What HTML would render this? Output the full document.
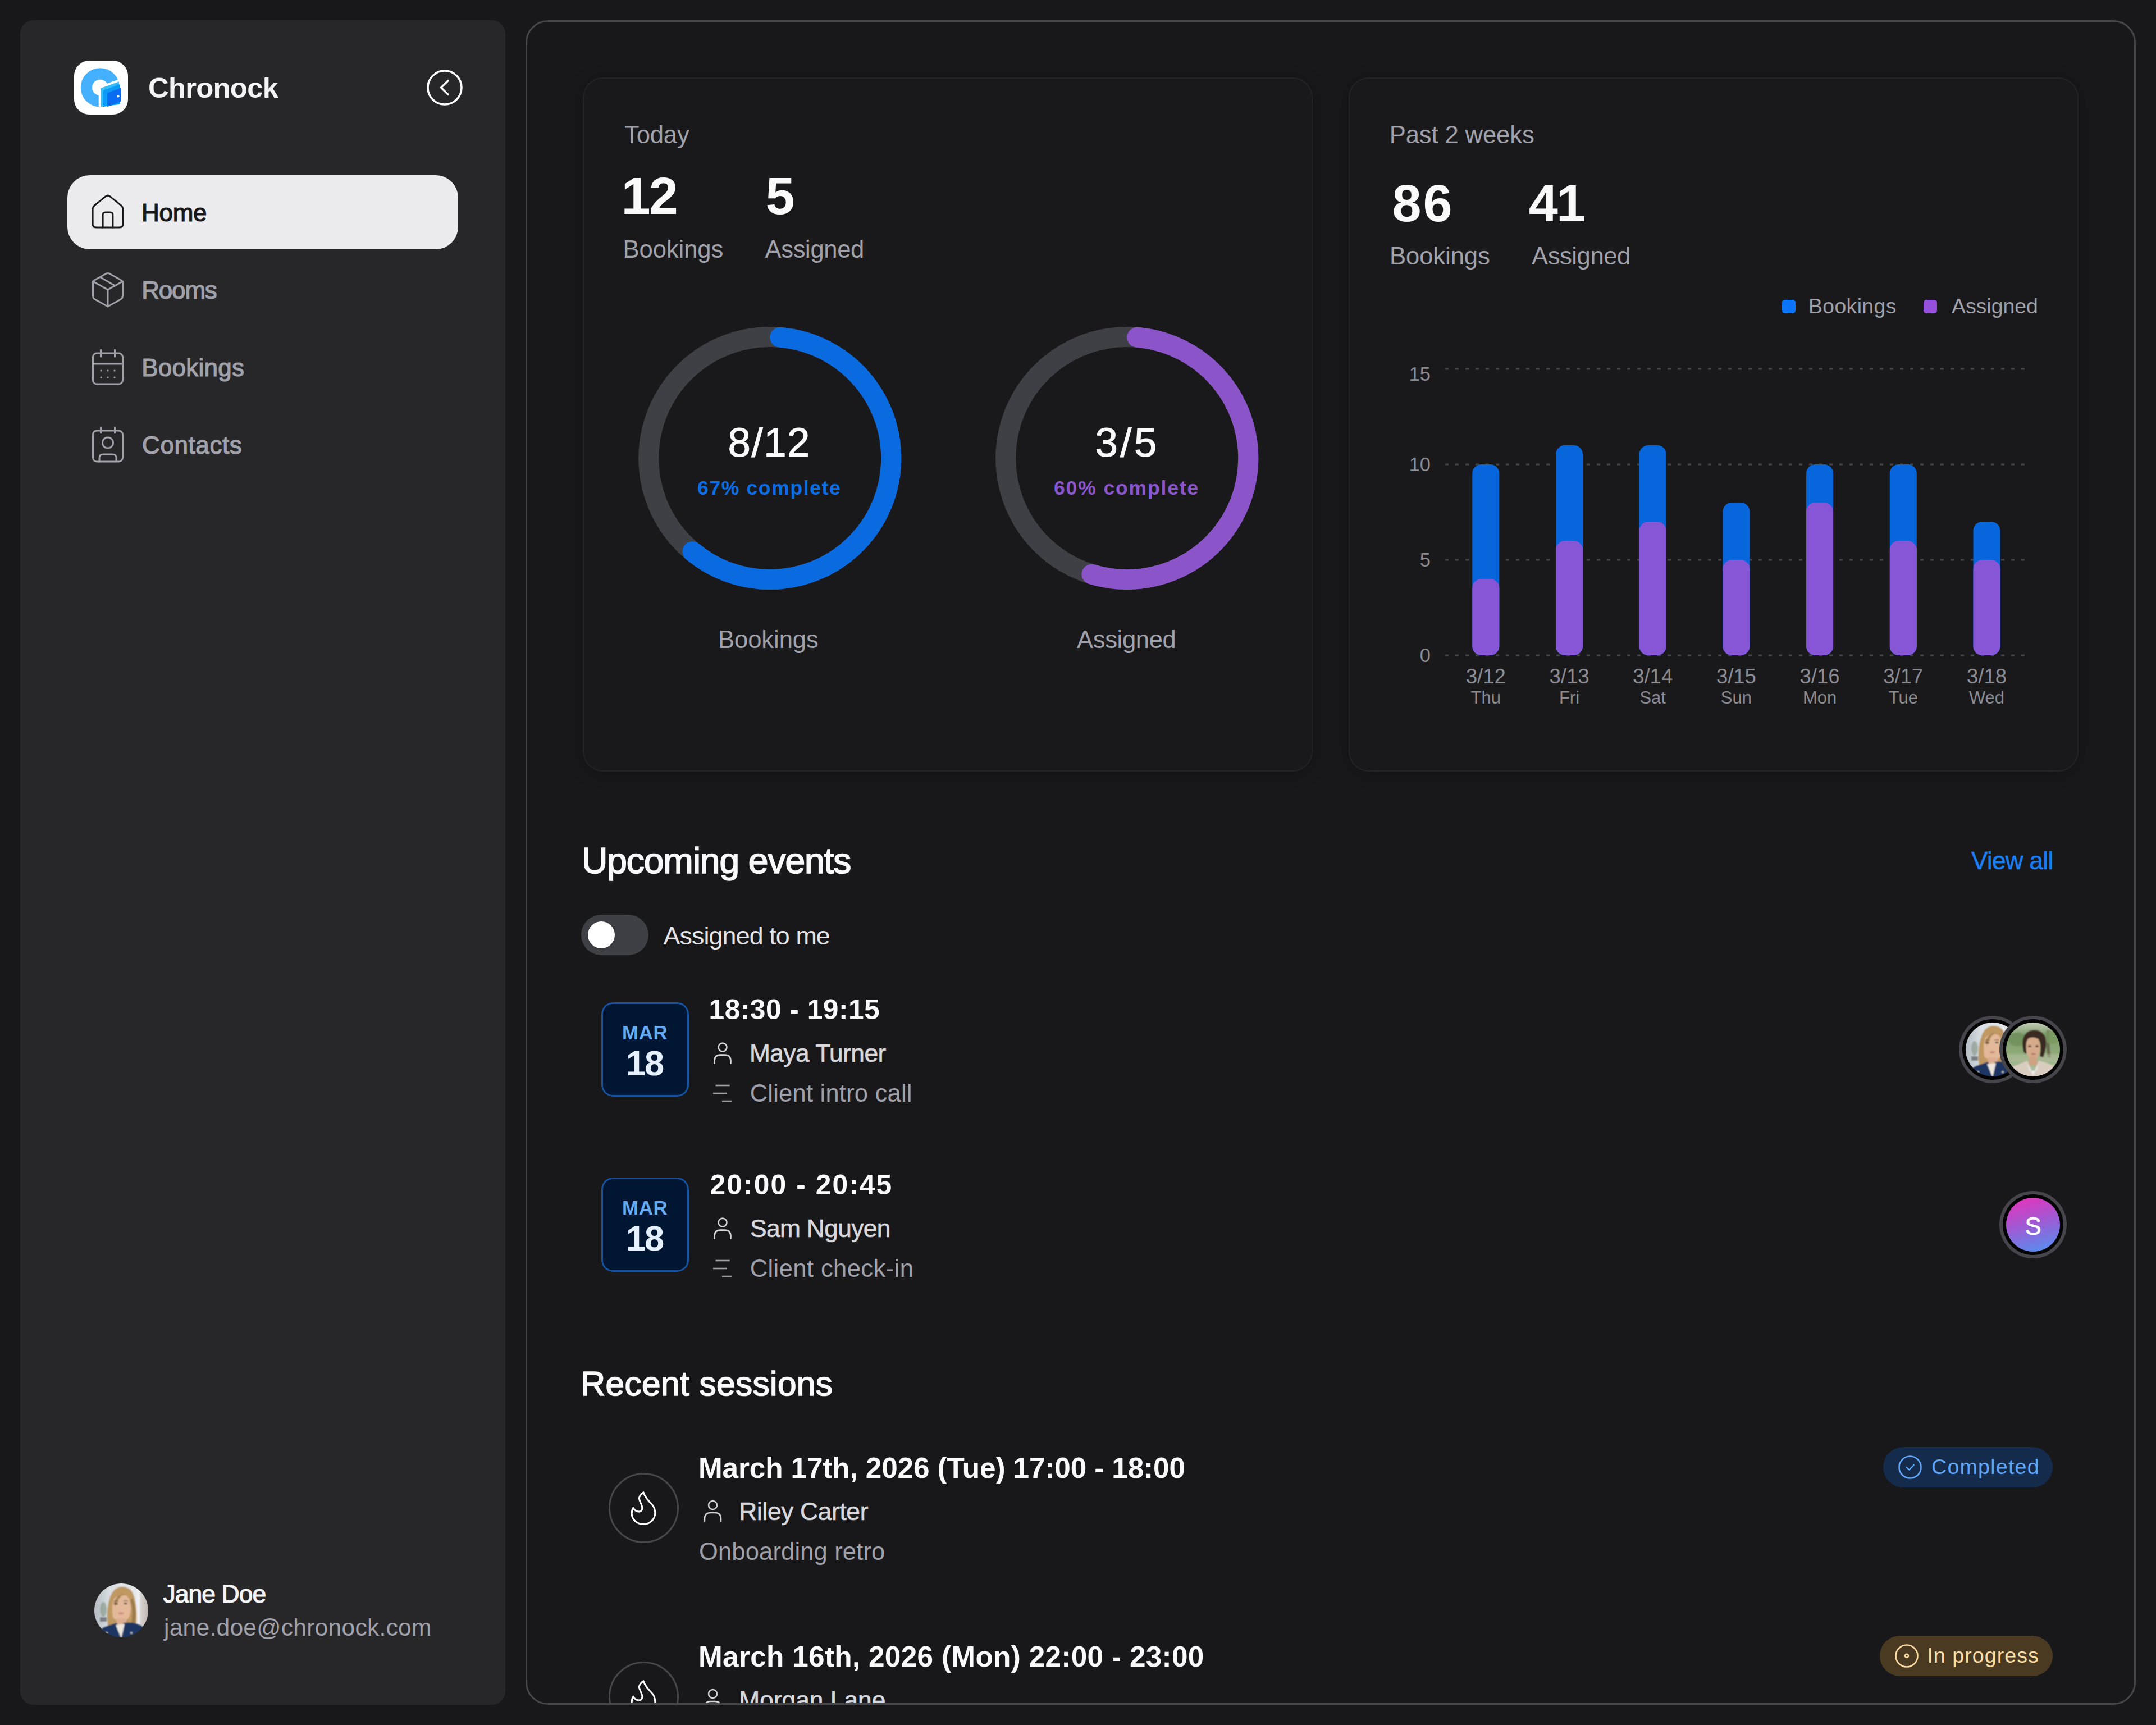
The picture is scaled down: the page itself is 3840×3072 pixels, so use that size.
<!DOCTYPE html>
<html><head><meta charset="utf-8"><title>Chronock</title>
<style>
html,body{margin:0;padding:0;}
body{width:3840px;height:3072px;background:#18181b;position:relative;overflow:hidden;font-family:"Liberation Sans",sans-serif;}
.t{position:absolute;white-space:nowrap;line-height:1;}
.abs{position:absolute;}
svg{position:absolute;overflow:visible;}
</style></head><body>
<div class="abs" style="left:36px;top:36px;width:864px;height:3000px;background:#27272a;border-radius:24px;"></div><svg style="left:0;top:0" width="3840" height="3072" viewBox="0 0 3840 3072">
<rect x="132" y="108" width="96" height="96" rx="27" fill="#ffffff"/>
<circle cx="178.4" cy="155.9" r="24.4" fill="none" stroke="#45b0fd" stroke-width="20.4"/>
<polygon points="175.7,154.3 221,137.7 219,196 175.7,199" fill="#ffffff"/>
<polygon points="179.1,157.2 211.9,145.2 212.4,186 179.1,190.2" fill="#38bdf8"/>
<polygon points="183.9,160.8 213.7,150 213.8,185 183.9,190.2" fill="#0b9bf6"/>
<polygon points="191,165.7 216,156 216,180.5 191,190.2" fill="#0a6cf2"/>
<circle cx="210.3" cy="171.3" r="2.3" fill="#ffffff"/>
</svg><div class="t" style="left:264.0px;top:132.4px;font-size:50.87px;letter-spacing:-0.77px;font-weight:700;color:#f4f4f5;">Chronock</div><svg style="left:0;top:0" width="900" height="300">
<circle cx="792" cy="156" r="30" fill="none" stroke="#ffffff" stroke-width="3.5"/>
<polyline points="798.2,143.6 785.6,156 798.2,168.4" fill="none" stroke="#ffffff" stroke-width="3.5" stroke-linecap="round" stroke-linejoin="round"/>
</svg><div class="abs" style="left:120px;top:312px;width:696px;height:132px;background:#ececee;border-radius:40px;"></div><svg style="left:0;top:0" width="900" height="900" fill="none" stroke-linecap="round" stroke-linejoin="round">
<g stroke="#18181b" stroke-width="3">
 <path d="M165.1 373 Q165.1 368.5 168.5 365.6 L188.2 349.6 Q192 346.6 195.8 349.6 L215.5 365.6 Q218.9 368.5 218.9 373 L218.9 399 Q218.9 405 212.9 405 L171.1 405 Q165.1 405 165.1 399 Z"/>
 <path d="M183.1 405 L183.1 382.5 Q183.1 378 187.6 378 L196.4 378 Q200.9 378 200.9 382.5 L200.9 405"/>
</g>
<g stroke="#a1a1aa" stroke-width="3">
 <path d="M188.5 487.5 Q192 485.5 195.5 487.5 L215 498.5 Q218.5 500.5 218.5 504.5 L218.5 527 Q218.5 531 215 533 L195.5 544 Q192 546 188.5 544 L169 533 Q165.5 531 165.5 527 L165.5 504.5 Q165.5 500.5 169 498.5 Z"/>
 <path d="M165.5 501 L192 516 L218.5 501"/>
 <path d="M192 516 L192 546"/>
 <path d="M178.5 493.5 L205 509"/>
 <rect x="165.5" y="629" width="53" height="55" rx="7"/>
 <path d="M165.5 648 L218.5 648"/>
 <path d="M179.5 623 L179.5 635"/><path d="M204.5 623 L204.5 635"/>
 <rect x="165.5" y="767" width="53" height="55" rx="7"/>
 <path d="M179.5 761 L179.5 771"/><path d="M204.5 761 L204.5 771"/>
 <circle cx="192" cy="788.5" r="9.5"/>
 <path d="M177 821 L177 815.5 Q177 809 183.5 809 L200.5 809 Q207 809 207 815.5 L207 821"/>
</g>
<g fill="#a1a1aa">
 <circle cx="180" cy="660" r="1.6"/><circle cx="192" cy="660" r="1.6"/><circle cx="204" cy="660" r="1.6"/>
 <circle cx="180" cy="672" r="1.6"/><circle cx="192" cy="672" r="1.6"/><circle cx="204" cy="672" r="1.6"/>
</g>
</svg><div class="t" style="left:252.1px;top:356.7px;font-size:44.00px;letter-spacing:-0.30px;font-weight:400;color:#18181b;-webkit-text-stroke:1.19px #18181b;">Home</div><div class="t" style="left:252.3px;top:494.7px;font-size:44.00px;letter-spacing:-1.21px;font-weight:400;color:#a1a1aa;-webkit-text-stroke:1.19px #a1a1aa;">Rooms</div><div class="t" style="left:252.3px;top:632.5px;font-size:44.00px;letter-spacing:0.23px;font-weight:400;color:#a1a1aa;-webkit-text-stroke:1.19px #a1a1aa;">Bookings</div><div class="t" style="left:253.1px;top:771.0px;font-size:44.00px;letter-spacing:0.58px;font-weight:400;color:#a1a1aa;-webkit-text-stroke:1.19px #a1a1aa;">Contacts</div><svg style="left:168px;top:2820px" width="96" height="96" viewBox="0 0 96 96">
<defs><clipPath id="jac"><circle cx="48" cy="48" r="48"/></clipPath>
<filter id="jaf" x="-10%" y="-10%" width="120%" height="120%"><feGaussianBlur stdDeviation="1.1"/></filter>
<linearGradient id="jabg" x1="0" y1="0" x2="1" y2="0"><stop offset="0" stop-color="#aeb7bd"/><stop offset="0.3" stop-color="#d9dee2"/><stop offset="0.75" stop-color="#e6e8ea"/><stop offset="1" stop-color="#b9aaa2"/></linearGradient></defs>
<g clip-path="url(#jac)"><g filter="url(#jaf)">
<rect x="-4" y="-4" width="104" height="104" fill="url(#jabg)"/>
<rect x="76" y="0" width="5" height="80" fill="#f4f6f8" opacity="0.8"/>
<ellipse cx="16" cy="46" rx="6" ry="13" fill="#6f8570" opacity="0.5"/>
<rect x="10" y="60" width="12" height="8" fill="#2d3035" opacity="0.5"/>
<path d="M24 78 Q20 48 28 24 Q36 5 50 6 Q66 6 71 24 Q78 50 74 80 Z" fill="#bf9862"/>
<path d="M33 60 Q30 36 36 26 Q46 18 58 22 Q66 30 65 48 Q64 62 56 66 L42 66 Q35 64 33 60 Z" fill="#e3b999"/>
<path d="M34 36 Q40 18 54 19 Q44 22 38 40 Z" fill="#a98352"/>
<path d="M64 30 Q70 44 66 70 L72 72 Q76 46 68 26 Z" fill="#9c7a4c"/>
<path d="M40 62 L56 62 L58 80 L38 80 Z" fill="#dcae91"/>
<ellipse cx="39" cy="36" rx="3.2" ry="1.6" fill="#6b5148"/><ellipse cx="55.5" cy="35.5" rx="3.2" ry="1.6" fill="#6b5148"/><path d="M35 32 Q39 30 43 32" stroke="#8a6a4e" stroke-width="1.4" fill="none"/><path d="M52 31.5 Q56 29.5 60 31.5" stroke="#8a6a4e" stroke-width="1.4" fill="none"/><ellipse cx="47.5" cy="53" rx="5" ry="1.8" fill="#c98578"/>
<path d="M4 100 Q6 80 22 76 L40 70 L46 92 L52 70 Q70 68 82 74 Q94 80 96 100 Z" fill="#1e3463"/>
<path d="M38 74 L48 98 L54 72 Z" fill="#ece6df"/>
<circle cx="22" cy="88" r="1.8" fill="#d9d4c8"/><circle cx="66" cy="88" r="1.8" fill="#d9d4c8"/>
</g></g></svg><div class="t" style="left:290.6px;top:2816.7px;font-size:44.33px;letter-spacing:-0.90px;font-weight:400;color:#f4f4f5;-webkit-text-stroke:1.20px #f4f4f5;">Jane Doe</div><div class="t" style="left:292.0px;top:2876.9px;font-size:42.59px;letter-spacing:0.24px;font-weight:400;color:#a1a1aa;">jane.doe@chronock.com</div><div class="abs" style="left:936px;top:36px;width:2868px;height:3000px;box-sizing:border-box;border:3px solid #47474a;border-radius:40px;background:#18181b;overflow:hidden;"><div class="abs" style="left:-939px;top:-39px;width:3840px;height:3072px;"><div class="abs" style="left:1038px;top:138px;width:1300px;height:1236px;box-sizing:border-box;border:2px solid #232327;border-radius:36px;background:#19191c;box-shadow:0 4px 30px rgba(0,0,0,0.22);"></div><div class="abs" style="left:2402px;top:138px;width:1300px;height:1236px;box-sizing:border-box;border:2px solid #232327;border-radius:36px;background:#19191c;box-shadow:0 4px 30px rgba(0,0,0,0.22);"></div><div class="t" style="left:1112.0px;top:218.8px;font-size:43.60px;letter-spacing:-0.16px;font-weight:400;color:#a1a1aa;">Today</div><div class="t" style="left:1106.5px;top:302.4px;font-size:93.60px;letter-spacing:-2.81px;font-weight:700;color:#fafafa;">12</div><div class="t" style="left:1363.5px;top:302.4px;font-size:93.60px;letter-spacing:0.00px;font-weight:700;color:#fafafa;">5</div><div class="t" style="left:1109.6px;top:422.8px;font-size:43.60px;letter-spacing:-0.09px;font-weight:400;color:#a1a1aa;">Bookings</div><div class="t" style="left:1362.5px;top:422.8px;font-size:43.60px;letter-spacing:-0.37px;font-weight:400;color:#a1a1aa;">Assigned</div><div class="t" style="left:1296.5px;top:752.2px;font-size:72.67px;letter-spacing:1.53px;font-weight:400;color:#fafafa;-webkit-text-stroke:1.02px #fafafa;">8/12</div><div class="t" style="left:1242.0px;top:852.1px;font-size:35.47px;letter-spacing:1.66px;font-weight:700;color:#0a6fe6;">67% complete</div><div class="t" style="left:1279.0px;top:1117.8px;font-size:43.60px;letter-spacing:-0.08px;font-weight:400;color:#a1a1aa;">Bookings</div><div class="t" style="left:1950.5px;top:752.2px;font-size:72.67px;letter-spacing:4.44px;font-weight:400;color:#fafafa;-webkit-text-stroke:1.02px #fafafa;">3/5</div><div class="t" style="left:1877.0px;top:852.1px;font-size:35.47px;letter-spacing:1.89px;font-weight:700;color:#8b55cc;">60% complete</div><div class="t" style="left:1918.0px;top:1117.8px;font-size:43.60px;letter-spacing:-0.36px;font-weight:400;color:#a1a1aa;">Assigned</div><div class="t" style="left:2474.7px;top:219.1px;font-size:43.60px;letter-spacing:-0.11px;font-weight:400;color:#a1a1aa;">Past 2 weeks</div><div class="t" style="left:2479.6px;top:314.9px;font-size:93.60px;letter-spacing:2.81px;font-weight:700;color:#fafafa;">86</div><div class="t" style="left:2722.7px;top:314.9px;font-size:93.60px;letter-spacing:-2.81px;font-weight:700;color:#fafafa;">41</div><div class="t" style="left:2475.0px;top:434.8px;font-size:43.60px;letter-spacing:-0.08px;font-weight:400;color:#a1a1aa;">Bookings</div><div class="t" style="left:2728.0px;top:434.8px;font-size:43.60px;letter-spacing:-0.44px;font-weight:400;color:#a1a1aa;">Assigned</div><div class="t" style="left:3221.0px;top:526.8px;font-size:37.35px;letter-spacing:0.39px;font-weight:400;color:#a1a1aa;">Bookings</div><div class="t" style="left:3476.0px;top:526.8px;font-size:37.35px;letter-spacing:0.03px;font-weight:400;color:#a1a1aa;">Assigned</div><svg style="left:0;top:0" width="3840" height="1400"><circle cx="1371.25" cy="816" r="216" fill="none" stroke="#3f3f46" stroke-width="36"/><path d="M1389.32 600.76 A216.00 216.00 0 1 1 1233.28 982.19" fill="none" stroke="#0a6ae0" stroke-width="36" stroke-linecap="round"/><circle cx="2007.25" cy="816" r="216" fill="none" stroke="#3f3f46" stroke-width="36"/><path d="M2025.32 600.76 A216.00 216.00 0 1 1 1944.46 1022.67" fill="none" stroke="#8b54c9" stroke-width="36" stroke-linecap="round"/><rect x="3174" y="534" width="24" height="24" rx="5" fill="#0a74fb"/><rect x="3426" y="534" width="24" height="24" rx="5" fill="#9551db"/><line x1="2574" y1="1167" x2="3612" y2="1167" stroke="#444449" stroke-width="3" stroke-dasharray="6 12"/><line x1="2574" y1="997" x2="3612" y2="997" stroke="#444449" stroke-width="3" stroke-dasharray="6 12"/><line x1="2574" y1="827" x2="3612" y2="827" stroke="#444449" stroke-width="3" stroke-dasharray="6 12"/><line x1="2574" y1="657" x2="3612" y2="657" stroke="#444449" stroke-width="3" stroke-dasharray="6 12"/><rect x="2622.3" y="827" width="48" height="340" rx="16" fill="#0766dc"/><rect x="2622.3" y="1031" width="48" height="136" rx="16" fill="#8756d6"/><rect x="2771.0" y="793" width="48" height="374" rx="16" fill="#0766dc"/><rect x="2771.0" y="963" width="48" height="204" rx="16" fill="#8756d6"/><rect x="2919.7" y="793" width="48" height="374" rx="16" fill="#0766dc"/><rect x="2919.7" y="929" width="48" height="238" rx="16" fill="#8756d6"/><rect x="3068.4" y="895" width="48" height="272" rx="16" fill="#0766dc"/><rect x="3068.4" y="997" width="48" height="170" rx="16" fill="#8756d6"/><rect x="3217.1" y="827" width="48" height="340" rx="16" fill="#0766dc"/><rect x="3217.1" y="895" width="48" height="272" rx="16" fill="#8756d6"/><rect x="3365.8" y="827" width="48" height="340" rx="16" fill="#0766dc"/><rect x="3365.8" y="963" width="48" height="204" rx="16" fill="#8756d6"/><rect x="3514.5" y="929" width="48" height="238" rx="16" fill="#0766dc"/><rect x="3514.5" y="997" width="48" height="170" rx="16" fill="#8756d6"/></svg><svg style="left:0;top:0" width="3840" height="1400" font-family="Liberation Sans, sans-serif" fill="#8b8b91"><text x="2548" y="1179.2" font-size="34.5" text-anchor="end">0</text><text x="2548" y="1009.2" font-size="34.5" text-anchor="end">5</text><text x="2548" y="839.2" font-size="34.5" text-anchor="end">10</text><text x="2548" y="678.4" font-size="34.5" text-anchor="end">15</text><text x="2646.3" y="1217" font-size="36.5" text-anchor="middle">3/12</text><text x="2646.3" y="1253.2" font-size="31" text-anchor="middle">Thu</text><text x="2795.0" y="1217" font-size="36.5" text-anchor="middle">3/13</text><text x="2795.0" y="1253.2" font-size="31" text-anchor="middle">Fri</text><text x="2943.7" y="1217" font-size="36.5" text-anchor="middle">3/14</text><text x="2943.7" y="1253.2" font-size="31" text-anchor="middle">Sat</text><text x="3092.4" y="1217" font-size="36.5" text-anchor="middle">3/15</text><text x="3092.4" y="1253.2" font-size="31" text-anchor="middle">Sun</text><text x="3241.1" y="1217" font-size="36.5" text-anchor="middle">3/16</text><text x="3241.1" y="1253.2" font-size="31" text-anchor="middle">Mon</text><text x="3389.8" y="1217" font-size="36.5" text-anchor="middle">3/17</text><text x="3389.8" y="1253.2" font-size="31" text-anchor="middle">Tue</text><text x="3538.5" y="1217" font-size="36.5" text-anchor="middle">3/18</text><text x="3538.5" y="1253.2" font-size="31" text-anchor="middle">Wed</text></svg><div class="t" style="left:1035.9px;top:1501.0px;font-size:64.10px;letter-spacing:-1.05px;font-weight:400;color:#fafafa;-webkit-text-stroke:1.73px #fafafa;">Upcoming events</div><div class="t" style="left:3511.0px;top:1511.0px;font-size:44.04px;letter-spacing:-0.68px;font-weight:400;color:#1a7ef2;-webkit-text-stroke:0.62px #1a7ef2;">View all</div><div class="abs" style="left:1035px;top:1629px;width:120px;height:72px;border-radius:36px;background:#3f3f46;"></div><div class="abs" style="left:1047px;top:1641px;width:48px;height:48px;border-radius:24px;background:#ffffff;box-shadow:0 1px 3px rgba(0,0,0,0.3);"></div><div class="t" style="left:1181.5px;top:1643.6px;font-size:44.77px;letter-spacing:-0.87px;font-weight:400;color:#e4e4e7;">Assigned to me</div><div class="abs" style="left:1071px;top:1785px;width:156px;height:168px;box-sizing:border-box;border:3px solid #1453a2;border-radius:21px;background:#011632;"></div><svg style="left:0;top:0" width="3840" height="3072" fill="none" stroke="#d4d4d8" stroke-width="2.6" stroke-linecap="round">
<circle cx="1287" cy="1865.1" r="7.5"/>
<path d="M1272.5 1893.6 L1272.5 1889.6 Q1272.5 1878.6 1283 1878.6 L1291 1878.6 Q1301.5 1878.6 1301.5 1889.6 L1301.5 1893.6"/>
</svg><svg style="left:0;top:0" width="3840" height="3072" fill="none" stroke="#a1a1aa" stroke-width="2.6" stroke-linecap="butt">
<path d="M1274.5 1933 L1299.7 1933"/><path d="M1270 1947 L1295 1947"/><path d="M1286 1961 L1303.6 1961"/>
</svg><div class="abs" style="left:1071px;top:2097px;width:156px;height:168px;box-sizing:border-box;border:3px solid #1453a2;border-radius:21px;background:#011632;"></div><svg style="left:0;top:0" width="3840" height="3072" fill="none" stroke="#d4d4d8" stroke-width="2.6" stroke-linecap="round">
<circle cx="1287" cy="2177.1" r="7.5"/>
<path d="M1272.5 2205.6 L1272.5 2201.6 Q1272.5 2190.6 1283 2190.6 L1291 2190.6 Q1301.5 2190.6 1301.5 2201.6 L1301.5 2205.6"/>
</svg><svg style="left:0;top:0" width="3840" height="3072" fill="none" stroke="#a1a1aa" stroke-width="2.6" stroke-linecap="butt">
<path d="M1274.5 2245 L1299.7 2245"/><path d="M1270 2259 L1295 2259"/><path d="M1286 2273 L1303.6 2273"/>
</svg><div class="t" style="left:1108.0px;top:1821.9px;font-size:34.90px;letter-spacing:0.57px;font-weight:700;color:#66abf6;">MAR</div><div class="t" style="left:1114.8px;top:1861.7px;font-size:63.20px;letter-spacing:-1.90px;font-weight:700;color:#e6effc;">18</div><div class="t" style="left:1262.6px;top:1774.3px;font-size:49.70px;letter-spacing:0.48px;font-weight:700;color:#fafafa;">18:30 - 19:15</div><div class="t" style="left:1335.0px;top:1853.7px;font-size:44.30px;letter-spacing:-0.54px;font-weight:400;color:#d8d8dc;-webkit-text-stroke:0.62px #d8d8dc;">Maya Turner</div><div class="t" style="left:1335.7px;top:1925.9px;font-size:43.50px;letter-spacing:0.22px;font-weight:400;color:#a1a1aa;">Client intro call</div><div class="t" style="left:1108.0px;top:2133.9px;font-size:34.90px;letter-spacing:0.57px;font-weight:700;color:#66abf6;">MAR</div><div class="t" style="left:1114.8px;top:2173.7px;font-size:63.20px;letter-spacing:-1.90px;font-weight:700;color:#e6effc;">18</div><div class="t" style="left:1264.6px;top:2086.3px;font-size:49.70px;letter-spacing:2.11px;font-weight:700;color:#fafafa;">20:00 - 20:45</div><div class="t" style="left:1336.0px;top:2165.7px;font-size:44.30px;letter-spacing:-0.64px;font-weight:400;color:#d8d8dc;-webkit-text-stroke:0.62px #d8d8dc;">Sam Nguyen</div><div class="t" style="left:1335.7px;top:2237.9px;font-size:43.50px;letter-spacing:0.42px;font-weight:400;color:#a1a1aa;">Client check-in</div><div class="abs" style="left:3489px;top:1809px;width:120px;height:120px;border-radius:60px;background:#45454b;"></div><div class="abs" style="left:3495px;top:1815px;width:108px;height:108px;border-radius:54px;background:#030304;"></div><svg style="left:3501px;top:1821px" width="96" height="96" viewBox="0 0 96 96">
<defs><clipPath id="a1c"><circle cx="48" cy="48" r="48"/></clipPath>
<filter id="a1f" x="-10%" y="-10%" width="120%" height="120%"><feGaussianBlur stdDeviation="1.1"/></filter>
<linearGradient id="a1bg" x1="0" y1="0" x2="1" y2="0"><stop offset="0" stop-color="#aeb7bd"/><stop offset="0.3" stop-color="#d9dee2"/><stop offset="0.75" stop-color="#e6e8ea"/><stop offset="1" stop-color="#b9aaa2"/></linearGradient></defs>
<g clip-path="url(#a1c)"><g filter="url(#a1f)">
<rect x="-4" y="-4" width="104" height="104" fill="url(#a1bg)"/>
<rect x="76" y="0" width="5" height="80" fill="#f4f6f8" opacity="0.8"/>
<ellipse cx="16" cy="46" rx="6" ry="13" fill="#6f8570" opacity="0.5"/>
<rect x="10" y="60" width="12" height="8" fill="#2d3035" opacity="0.5"/>
<path d="M24 78 Q20 48 28 24 Q36 5 50 6 Q66 6 71 24 Q78 50 74 80 Z" fill="#bf9862"/>
<path d="M33 60 Q30 36 36 26 Q46 18 58 22 Q66 30 65 48 Q64 62 56 66 L42 66 Q35 64 33 60 Z" fill="#e3b999"/>
<path d="M34 36 Q40 18 54 19 Q44 22 38 40 Z" fill="#a98352"/>
<path d="M64 30 Q70 44 66 70 L72 72 Q76 46 68 26 Z" fill="#9c7a4c"/>
<path d="M40 62 L56 62 L58 80 L38 80 Z" fill="#dcae91"/>
<ellipse cx="39" cy="36" rx="3.2" ry="1.6" fill="#6b5148"/><ellipse cx="55.5" cy="35.5" rx="3.2" ry="1.6" fill="#6b5148"/><path d="M35 32 Q39 30 43 32" stroke="#8a6a4e" stroke-width="1.4" fill="none"/><path d="M52 31.5 Q56 29.5 60 31.5" stroke="#8a6a4e" stroke-width="1.4" fill="none"/><ellipse cx="47.5" cy="53" rx="5" ry="1.8" fill="#c98578"/>
<path d="M4 100 Q6 80 22 76 L40 70 L46 92 L52 70 Q70 68 82 74 Q94 80 96 100 Z" fill="#1e3463"/>
<path d="M38 74 L48 98 L54 72 Z" fill="#ece6df"/>
<circle cx="22" cy="88" r="1.8" fill="#d9d4c8"/><circle cx="66" cy="88" r="1.8" fill="#d9d4c8"/>
</g></g></svg><div class="abs" style="left:3561px;top:1809px;width:120px;height:120px;border-radius:60px;background:#45454b;"></div><div class="abs" style="left:3567px;top:1815px;width:108px;height:108px;border-radius:54px;background:#030304;"></div><svg style="left:3573px;top:1821px" width="96" height="96" viewBox="0 0 96 96">
<defs><clipPath id="a2c"><circle cx="48" cy="48" r="48"/></clipPath>
<filter id="a2f" x="-10%" y="-10%" width="120%" height="120%"><feGaussianBlur stdDeviation="1.1"/></filter>
<linearGradient id="a2bg" x1="0" y1="0" x2="0" y2="1"><stop offset="0" stop-color="#cfd8c6"/><stop offset="0.25" stop-color="#7f9c6c"/><stop offset="0.6" stop-color="#8fab78"/><stop offset="1" stop-color="#c2c9b6"/></linearGradient></defs>
<g clip-path="url(#a2c)"><g filter="url(#a2f)">
<rect x="-4" y="-4" width="104" height="104" fill="url(#a2bg)"/>
<path d="M72 14 Q70 40 74 62 L80 62 Q76 40 78 14 Z" fill="#5b5142" opacity="0.7"/><ellipse cx="20" cy="30" rx="16" ry="12" fill="#6e8f5a" opacity="0.8"/><ellipse cx="82" cy="26" rx="16" ry="12" fill="#7a9a62" opacity="0.8"/><rect x="0" y="56" width="96" height="14" fill="#b5bfa2" opacity="0.5"/>
<path d="M30 46 Q26 20 44 14 Q62 10 70 26 Q74 42 66 62 L60 60 Q64 40 58 30 Q48 26 38 34 L36 56 Q30 54 30 46 Z" fill="#3b2b23"/>
<path d="M36 50 Q34 34 40 28 Q50 24 58 30 Q62 40 60 52 Q58 64 48 66 Q38 64 36 50 Z" fill="#d6ab8b"/>
<path d="M42 60 L54 60 L56 76 L40 76 Z" fill="#cfa282"/>
<ellipse cx="42" cy="42" rx="3" ry="1.5" fill="#4a3730"/><ellipse cx="55" cy="42" rx="3" ry="1.5" fill="#4a3730"/><ellipse cx="48.5" cy="56" rx="4.5" ry="1.6" fill="#b9786a"/>
<path d="M0 100 Q2 82 18 76 L38 68 L48 90 L58 68 Q78 72 88 80 Q96 88 96 100 Z" fill="#d9cdbf"/>
<path d="M38 72 L48 94 L58 72 L54 86 L42 86 Z" fill="#eeeef2"/>
</g></g></svg><div class="abs" style="left:3561px;top:2121px;width:120px;height:120px;border-radius:60px;background:#45454b;"></div><div class="abs" style="left:3567px;top:2127px;width:108px;height:108px;border-radius:54px;background:#030304;"></div><div class="abs" style="left:3573px;top:2133px;width:96px;height:96px;border-radius:48px;background:linear-gradient(165deg,#ec2fb8 0%,#a457d2 45%,#4d94f2 100%);"></div><div class="t" style="left:3606.5px;top:2162.0px;font-size:43.75px;letter-spacing:0.00px;font-weight:400;color:#ffffff;-webkit-text-stroke:0.61px #ffffff;">S</div><div class="t" style="left:1034.6px;top:2434.1px;font-size:60.32px;letter-spacing:0.42px;font-weight:400;color:#fafafa;-webkit-text-stroke:1.63px #fafafa;">Recent sessions</div><div class="abs" style="left:1083.5px;top:2622.5px;width:125px;height:125px;box-sizing:border-box;border:3px solid #46464b;border-radius:63px;"></div>
<svg style="left:0;top:0" width="3840" height="3072" fill="none" stroke="#ffffff" stroke-width="3" stroke-linejoin="round" stroke-linecap="round">
<path transform="translate(1146 2685)" d="M0 -27.3 C3 -18 10 -11 14.5 -6.5 C19 -2 20.8 3 20.8 9.6 C20.8 21 11 29.6 0 29.6 C-11.5 29.6 -20.8 21 -20.8 10.4 C-20.8 6.5 -19.8 2.8 -18.1 0.2 C-16.5 4.5 -12 7.3 -8 7 C-3 6.7 -0.8 2.5 -3 -4 C-5 -9.5 -9 -15 -7.2 -19 C-5.5 -23 -2.5 -25.5 0 -27.3 Z"/>
</svg><div class="abs" style="left:1083.5px;top:2958.5px;width:125px;height:125px;box-sizing:border-box;border:3px solid #46464b;border-radius:63px;"></div>
<svg style="left:0;top:0" width="3840" height="3072" fill="none" stroke="#ffffff" stroke-width="3" stroke-linejoin="round" stroke-linecap="round">
<path transform="translate(1146 3021)" d="M0 -27.3 C3 -18 10 -11 14.5 -6.5 C19 -2 20.8 3 20.8 9.6 C20.8 21 11 29.6 0 29.6 C-11.5 29.6 -20.8 21 -20.8 10.4 C-20.8 6.5 -19.8 2.8 -18.1 0.2 C-16.5 4.5 -12 7.3 -8 7 C-3 6.7 -0.8 2.5 -3 -4 C-5 -9.5 -9 -15 -7.2 -19 C-5.5 -23 -2.5 -25.5 0 -27.3 Z"/>
</svg><div class="t" style="left:1244.0px;top:2588.7px;font-size:51.30px;letter-spacing:-0.13px;font-weight:700;color:#fafafa;">March 17th, 2026 (Tue) 17:00 - 18:00</div><svg style="left:0;top:0" width="3840" height="3072" fill="none" stroke="#d4d4d8" stroke-width="2.6" stroke-linecap="round">
<circle cx="1269.5" cy="2680.5" r="7.5"/>
<path d="M1255.0 2709 L1255.0 2705 Q1255.0 2694 1265.5 2694 L1273.5 2694 Q1284.0 2694 1284.0 2705 L1284.0 2709"/>
</svg><div class="t" style="left:1316.3px;top:2669.9px;font-size:44.30px;letter-spacing:-0.34px;font-weight:400;color:#d8d8dc;-webkit-text-stroke:0.62px #d8d8dc;">Riley Carter</div><div class="t" style="left:1245.0px;top:2741.9px;font-size:43.50px;letter-spacing:0.16px;font-weight:400;color:#a1a1aa;">Onboarding retro</div><div class="t" style="left:1244.0px;top:2925.0px;font-size:51.30px;letter-spacing:0.31px;font-weight:700;color:#fafafa;">March 16th, 2026 (Mon) 22:00 - 23:00</div><svg style="left:0;top:0" width="3840" height="3072" fill="none" stroke="#d4d4d8" stroke-width="2.6" stroke-linecap="round">
<circle cx="1269.5" cy="3016.5" r="7.5"/>
<path d="M1255.0 3045 L1255.0 3041 Q1255.0 3030 1265.5 3030 L1273.5 3030 Q1284.0 3030 1284.0 3041 L1284.0 3045"/>
</svg><div class="t" style="left:1316.3px;top:3005.9px;font-size:44.30px;letter-spacing:0.00px;font-weight:400;color:#d8d8dc;-webkit-text-stroke:0.62px #d8d8dc;">Morgan Lane</div><div class="abs" style="left:3354px;top:2577px;width:302px;height:72px;border-radius:36px;background:#142b4c;"></div><svg style="left:0;top:0" width="3840" height="3072" fill="none" stroke="#62a6f8" stroke-width="2.6" stroke-linecap="round" stroke-linejoin="round">
<circle cx="3402" cy="2613" r="19.5"/><polyline points="3395.5,2613 3400.4,2617.5 3408.8,2609" stroke-width="2.3"/></svg><div class="t" style="left:3440.0px;top:2594.3px;font-size:37.65px;letter-spacing:1.20px;font-weight:400;color:#62a6f8;">Completed</div><div class="abs" style="left:3348px;top:2913px;width:308px;height:72px;border-radius:36px;background:#4a3a22;"></div><svg style="left:0;top:0" width="3840" height="3072" fill="none" stroke="#fcdca4" stroke-width="2.6">
<circle cx="3396" cy="2949" r="19.5"/><circle cx="3396" cy="2948.7" r="3"/></svg><div class="t" style="left:3432.4px;top:2930.2px;font-size:37.65px;letter-spacing:1.01px;font-weight:400;color:#fcdca4;">In progress</div></div></div></body></html>
